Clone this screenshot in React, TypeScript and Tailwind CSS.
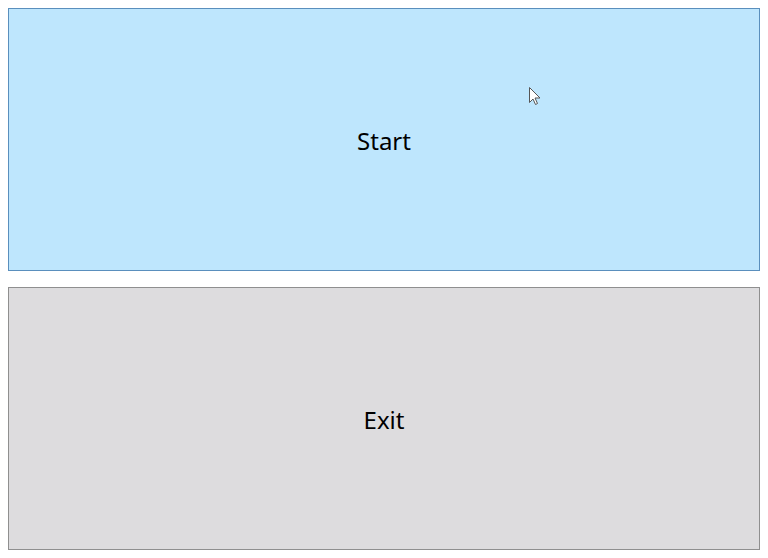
export default function App() {
  return (
    <div className="relative flex h-[558px] w-[768px] flex-col gap-4 bg-white p-2 font-['Noto_Sans',sans-serif]">
      <button className="flex flex-1 items-center justify-center border border-[#5a8fbd] bg-[#bee6fd] pt-[2px] text-[24px] leading-none text-black">
        Start
      </button>
      <button className="flex flex-1 items-center justify-center border border-[#8f8f8f] bg-[#dddcde] pt-[2px] text-[24px] leading-none text-black">
        Exit
      </button>
      <svg
        aria-hidden="true"
        className="absolute left-[529px] top-[87px]"
        width="12"
        height="19"
        viewBox="0 0 12 19"
      >
        <path
          d="M0.5 0.5V15.5L4 12L6.5 17.5L8.5 16.5L6 11H11Z"
          fill="white"
          stroke="#555"
          strokeWidth="1"
          strokeLinejoin="round"
        />
      </svg>
    </div>
  );
}
